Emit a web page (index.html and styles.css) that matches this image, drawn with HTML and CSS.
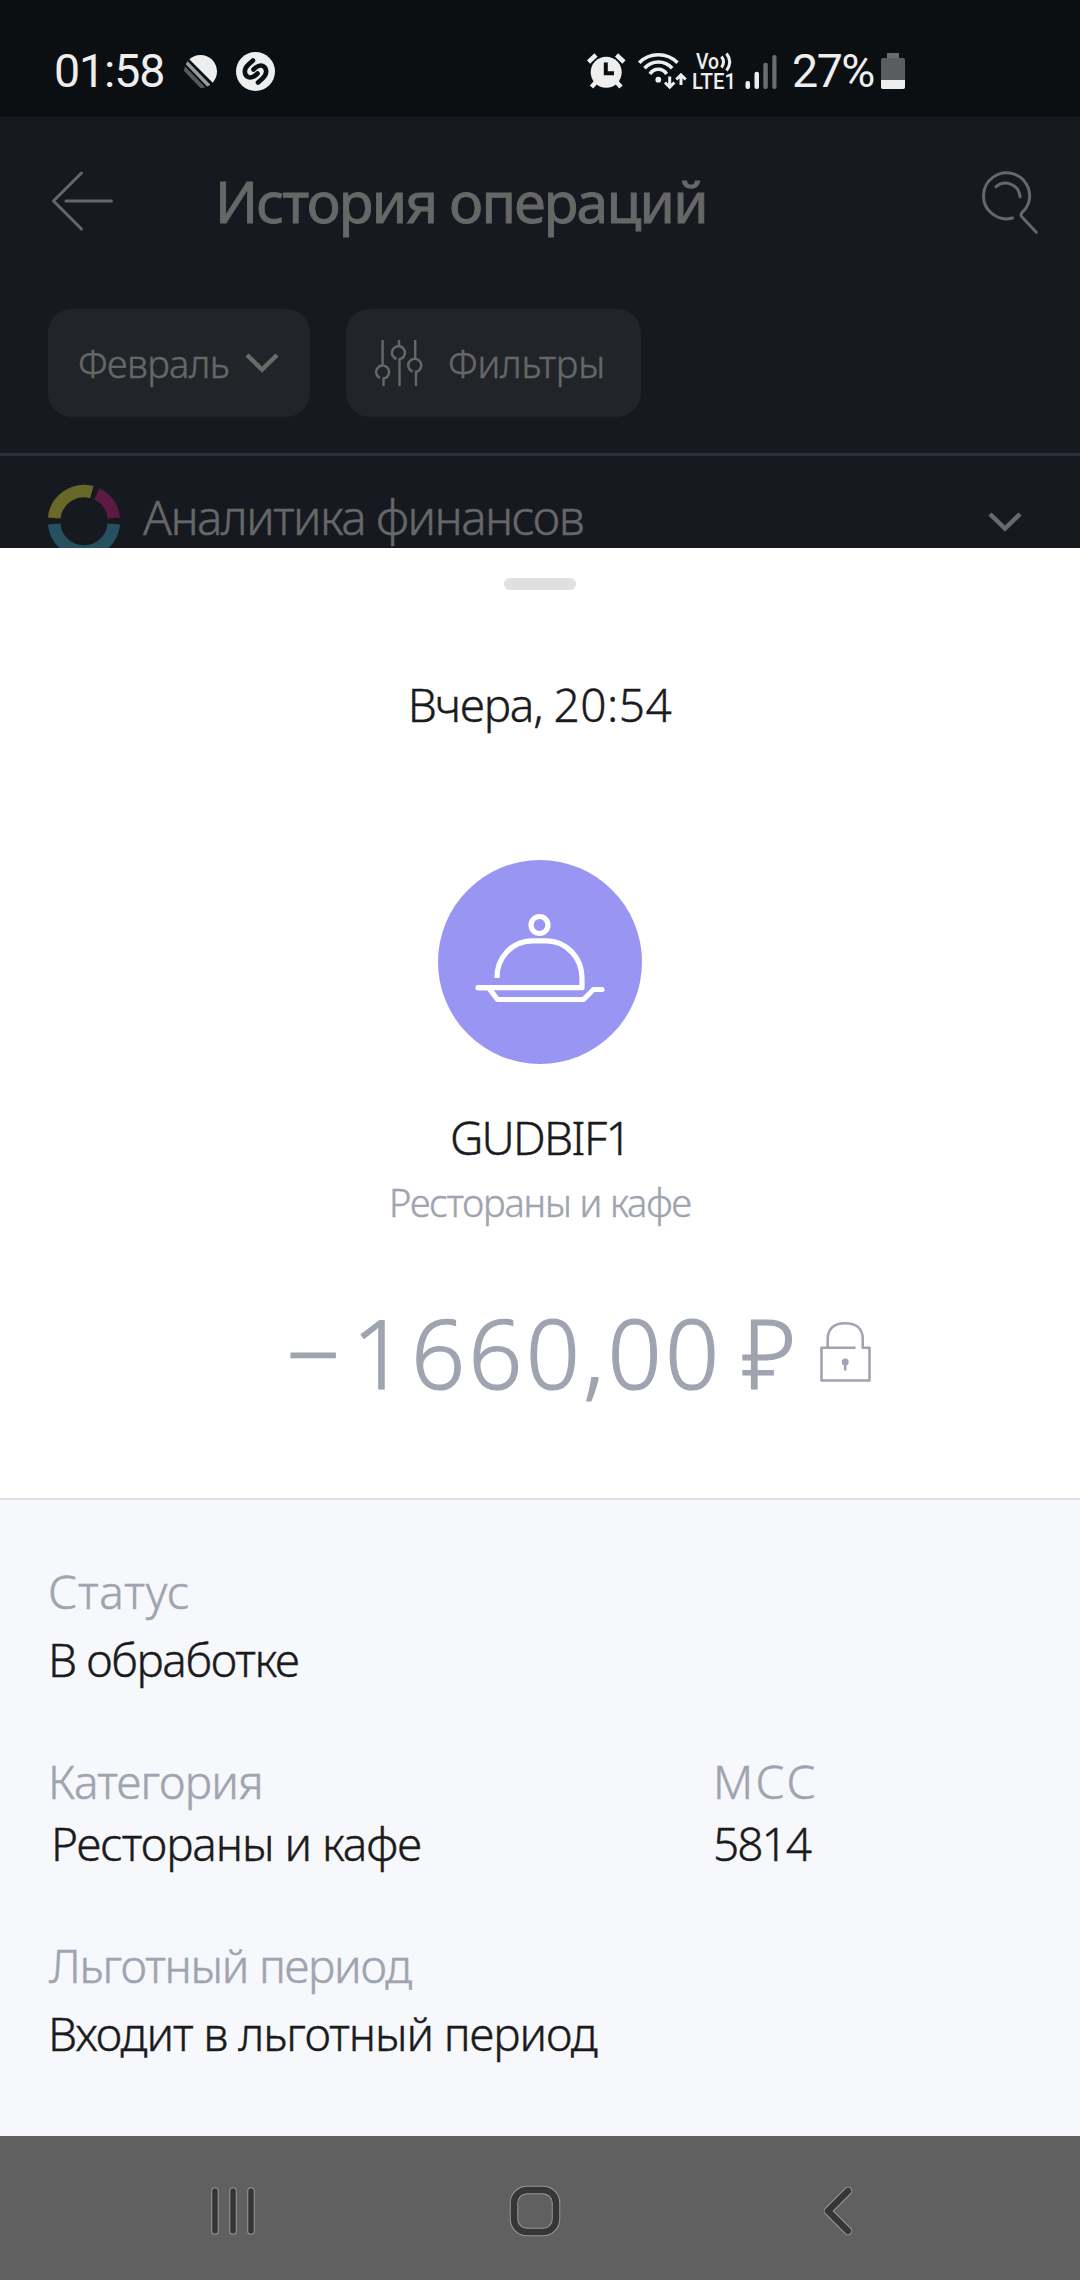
FILE: index.html
```html
<!DOCTYPE html>
<html lang="ru">
<head>
<meta charset="utf-8">
<title>История операций</title>
<link rel="stylesheet" href="styles.css">
</head>
<body>
<div class="screen">
  <header class="statusbar">
    <span class="clock">01:58</span>
    <svg class="ic-disc" width="35" height="36" viewBox="0 0 35 36">
      <clipPath id="disc"><circle cx="17.5" cy="18.5" r="16.5"/></clipPath>
      <g clip-path="url(#disc)">
        <path d="M5 5 31 31 40 20V0H5Z" fill="#eee"/>
        <path d="M0 6 30 37" stroke="#9a9b9c" stroke-width="3.6"/>
        <path d="M-3 11 25 40" stroke="#58595a" stroke-width="4"/>
      </g>
    </svg>
    <svg class="ic-note" width="39" height="39" viewBox="0 0 39 39">
      <circle cx="19.5" cy="19.5" r="19.5" fill="#eee"/>
      <g fill="none" stroke="#0b0f12" stroke-width="4.6" stroke-linecap="round">
        <path d="M17 8.5 12.5 12.5C6.500 18 9 23.500 12 25C15 26.500 17.500 25.500 21.500 21.500"/>
        <path d="M22 30.500 26.500 26.500C32.500 21 30 15.500 27 14C24 12.500 21.500 13.500 17.500 17.500"/>
      </g>
    </svg>
    <span class="spacer"></span>
    <svg class="ic-alarm" width="41" height="40" viewBox="0 0 41 40">
      <circle cx="20.200" cy="21.200" r="15.500" fill="#eee"/>
      <g fill="none" stroke="#eee" stroke-width="4.500"><path d="M2.500 11 10 4M38 11 30.500 4"/><path d="M10 31 5.500 36M30.500 31 35 36" /></g>
      <path d="M19.800 11.500V22.200H28" fill="none" stroke="#0b0f12" stroke-width="4"/>
    </svg>
    <svg class="ic-wifi" width="52" height="40" viewBox="0 0 52 40">
      <g fill="none" stroke="#eee" stroke-width="3.600">
        <path d="M3.200 11.700A27 27 0 0 1 41.500 11.700"/><path d="M8.500 17.200A18.600 18.600 0 0 1 36.200 17.200"/><path d="M14 23A9.700 9.700 0 0 1 30.600 23"/>
        <path d="M33.700 25.500V36M29 31.500 33.700 36.200 38.400 31.500M45 34V24M40.300 28.500 45 23.800 49.700 28.500" stroke-width="3"/>
      </g>
      <circle cx="22.300" cy="28.700" r="2.900" fill="#eee"/>
    </svg>
    <svg class="ic-volte" width="48" height="40" viewBox="0 0 48 40">
      <g class="volte-text"><text x="5" y="18" textLength="23" lengthAdjust="spacingAndGlyphs">Vo</text><text x="1" y="37.500" textLength="44" lengthAdjust="spacingAndGlyphs">LTE1</text></g>
      <path d="M30.500 5.500Q34.500 11 30.500 16.500M35.500 2.500Q42 11 35.500 19.500" fill="none" stroke="#eee" stroke-width="3"/>
    </svg>
    <svg class="ic-signal" width="32" height="36" viewBox="0 0 32 36">
      <g fill="#eee"><rect x=".5" y="28" width="4.500" height="8" rx="2"/><rect x="9.500" y="18.700" width="4.500" height="17.300" rx="2"/></g>
      <g fill="#6b6d6f"><rect x="18.300" y="9.700" width="4.500" height="26.300" rx="2"/><rect x="27.300" y="2" width="4.200" height="34" rx="2"/></g>
    </svg>
    <span class="percent">27%</span>
    <svg class="ic-battery" width="24" height="36" viewBox="0 0 24 36">
      <path d="M6 0H18V6H6Z" fill="#6a6b6d"/><rect y="5" width="24" height="31" rx="2" fill="#5b5c5e"/><path d="M0 27H24V34a2 2 0 0 1-2 2H2a2 2 0 0 1-2-2Z" fill="#eee"/>
    </svg>
  </header>

  <section class="history">
    <div class="appbar">
      <svg class="stroke-icon" width="66" height="66" viewBox="0 0 66 66"><path d="M31.500 5 3.500 33 31.500 61M16 33H61.500"/></svg>
      <h1 class="title">История операций</h1>
      <svg class="stroke-icon" width="62" height="66" viewBox="0 0 62 66"><path d="M32.500 50A23 23 0 1 1 45.700 40.500L42 44.500Q40 47 42 49L56.300 64.200M16 18.700A14.500 14.500 0 0 1 40 29"/></svg>
    </div>
    <div class="chips">
      <div class="chip chip-month"><span class="chip-text">Февраль</span>
        <svg class="chevron" width="34" height="20" viewBox="0 0 34 20"><path d="M2 2 17 16.500 32 2"/></svg>
      </div>
      <div class="chip chip-filter">
        <svg class="sliders" width="50" height="48" viewBox="0 0 50 48"><path d="M7.600 1V27M5 39A6.500 6.500 0 1 1 8.500 39.500V47M24 1V7.500M21.500 20A6.500 6.500 0 1 1 24.500 20.200V47M40.200 1V20M37.700 32.500A6.500 6.500 0 1 1 41 32.700V47"/></svg>
        <span class="chip-text">Фильтры</span>
      </div>
    </div>
    <div class="analytics">
      <svg class="donut" width="72" height="72" viewBox="0 0 72 72">
        <g fill="none" stroke-width="12.500"><path d="M6.200 33A29.900 29.900 0 0 1 43.800 7.100" stroke="#68682a"/><path d="M48.800 8.900A29.900 29.900 0 0 1 65.800 33" stroke="#5c1a42"/><path d="M6.200 39A29.900 29.900 0 0 0 65.800 39" stroke="#264f60"/></g>
      </svg>
      <span class="analytics-text">Аналитика финансов</span>
      <svg class="chevron" width="34" height="20" viewBox="0 0 34 20"><path d="M2 2 17 16.500 32 2"/></svg>
    </div>
  </section>

  <main class="sheet">
    <div class="handle"></div>
    <div class="date"><span class="day">Вчера, </span>20:54</div>
    <svg class="category-icon" width="204" height="204" viewBox="0 0 204 204">
      <circle cx="102" cy="102" r="102" fill="#9996f3"/>
      <g fill="none" stroke="#fff" stroke-width="5.200" stroke-linejoin="round">
        <circle cx="101.500" cy="65" r="8.500"/>
        <path d="M59 118C58.700 98 73.500 80.800 94.500 80.800H108.500C128.500 80.800 144 98 144 118V127.700H40" />
        <path d="M40 127.700H50.500L59.500 139.500H145.500L155.500 129.500H164" stroke-linecap="round"/>
      </g>
    </svg>
    <div class="merchant">GUDBIF1</div>
    <div class="merchant-type">Рестораны и кафе</div>
    <div class="amount">
      <span class="minus">−</span><span class="thousands">1</span><span class="sum">660,00</span><span class="currency">₽</span>
      <svg class="lock" width="56" height="64" viewBox="0 0 56 64"><path d="M37.500 27.700H3.500V60.500H51.500V27.700H44.700V19C44.700 8 37.500 3.300 27.200 3.300S9.700 8 9.700 19V27.700"/><circle cx="27.200" cy="42" r="3.500"/><path d="M27.200 42V50.500"/></svg>
    </div>
  </main>

  <section class="details">
    <div class="field"><div class="label status-label">Статус</div><div class="value status-value">В обработке</div></div>
    <div class="pair">
      <div class="field tight"><div class="label">Категория</div><div class="value category-value">Рестораны и кафе</div></div>
      <div class="field tight"><div class="label mcc-label">МСС</div><div class="value mcc-value">5814</div></div>
    </div>
    <div class="field"><div class="label period-label">Льготный период</div><div class="value">Входит в льготный период</div></div>
  </section>

  <nav class="navbar">
    <svg width="50" height="54" viewBox="0 0 50 54"><g class="nav-edge bars"><path d="M7 7V47M25 7V47M43 7V47"/></g><g class="nav-fill bars"><path d="M7 7V47M25 7V47M43 7V47"/></g></svg>
    <svg class="home" width="54" height="54" viewBox="0 0 54 54"><rect class="nav-edge" x="6" y="6" width="42" height="42" rx="13"/><rect class="nav-fill" x="6" y="6" width="42" height="42" rx="13"/></svg>
    <svg width="36" height="54" viewBox="0 0 36 54"><path class="nav-edge" d="M28 7 8 27 28 47"/><path class="nav-fill" d="M28 7 8 27 28 47"/></svg>
  </nav>
</div>
</body>
</html>
```
FILE: styles.css
```css
* { box-sizing: border-box; }
body { margin: 0; background: #161920; font-family: "Noto Sans", "Open Sans", sans-serif; font-weight: 300; }
svg { display: block; flex: none; overflow: visible; }
.screen { width: 1080px; height: 2280px; display: flex; flex-direction: column; overflow: hidden; }

/* System status bar */
.statusbar { height: 117px; padding: 25px 175px 0 54px; background: #0b0f12; display: flex; align-items: center; font-family: Roboto, sans-serif; font-weight: 400; font-size: 46.5px; line-height: 54px; color: #eee; }
.clock { width: 129px; letter-spacing: -1.1px; }
.ic-note { margin-left: 18px; }
.spacer { flex: 1; }
.ic-alarm { margin-right: 9px; }
.ic-wifi { margin-right: 3px; }
.ic-volte { margin-right: 6px; }
.ic-signal { margin-right: 15px; }
.percent { width: 89px; letter-spacing: -1.5px; white-space: nowrap; }
.volte-text { font-size: 21.5px; font-weight: 500; fill: #eee; }

/* Dimmed screen behind the sheet */
.history { height: 431px; overflow: hidden; color: #676767; background: linear-gradient(#161920 94%, #15181c); -webkit-text-stroke: 0.5px currentColor; }
.appbar { height: 168px; padding: 0 38px 0 50px; display: flex; align-items: center; }
.stroke-icon { fill: none; stroke: #676767; stroke-width: 3; stroke-linecap: round; stroke-linejoin: round; }
.title { flex: 1; margin: 0 0 0 99px; font-size: 57px; line-height: 80px; font-weight: 400; letter-spacing: -1.8px; -webkit-text-stroke: 0.9px currentColor; }
.chips { display: flex; gap: 36px; margin: 24px 48px 36px; }
.chip { height: 108px; border-radius: 24px; background: #212428; display: flex; align-items: center; font-size: 38px; line-height: 50px; }
.chip-month { width: 262px; padding: 0 31px 0 30px; justify-content: space-between; letter-spacing: -0.6px; }
.chip-filter { width: 295px; padding-left: 29px; gap: 23px; letter-spacing: -0.2px; }
.chevron { fill: none; stroke: #6a6a6a; stroke-width: 4.5; }
.sliders { fill: none; stroke: #676767; stroke-width: 2.4; }
.analytics { height: 134px; border-top: 3px solid #2b2e36; padding: 29px 58px 0 48px; display: flex; align-items: flex-start; }
.analytics-text { flex: 1; margin: -3px 0 0 23px; font-size: 47.5px; line-height: 70px; letter-spacing: -1.5px; }
.analytics .chevron { margin-top: 27px; }

/* Operation sheet */
.sheet { height: 952px; background: #fff; border-bottom: 2px solid #dfe1e5; padding-top: 30px; display: flex; flex-direction: column; align-items: center; color: #1b1b1d; -webkit-text-stroke: 0.4px currentColor; }
.handle { width: 72px; height: 12px; border-radius: 6px; background: #e0e0e0; }
.date { margin-top: 84px; font-size: 46px; line-height: 60px; letter-spacing: 0.5px; white-space: pre; }
.day { letter-spacing: -1.1px; }
.category-icon { margin-top: 126px; }
.merchant { margin-top: 43px; font-size: 46px; line-height: 60px; letter-spacing: -1.7px; }
.merchant-type { margin-top: 10px; font-size: 38px; line-height: 50px; letter-spacing: -1.1px; color: #9fa4b0; }
.amount { align-self: stretch; margin-top: 65px; padding-left: 286px; display: flex; font-size: 95px; line-height: 120px; color: #9fa4b0; -webkit-text-stroke: 1.2px currentColor; }
.minus, .thousands, .currency { width: 66px; }
.thousands { width: 59px; }
.sum { width: 331px; letter-spacing: 3.1px; }
.currency { width: 76px; }
.lock { margin-top: 28px; fill: none; stroke: #9fa4b0; stroke-width: 2.6; stroke-linejoin: round; }
.lock circle { fill: #9fa4b0; stroke: none; }

/* Operation details */
.details { height: 636px; background: #f7f8fb; padding: 61px 48px 0; display: flex; flex-direction: column; gap: 62px; font-size: 46px; line-height: 60px; letter-spacing: -1.1px; color: #1b1b1d; -webkit-text-stroke: 0.4px currentColor; }
.field { display: flex; flex-direction: column; gap: 8px; }
.tight { gap: 2px; }
.pair { display: grid; grid-template-columns: 665px 1fr; }
.label { color: #9fa4b0; letter-spacing: -0.75px; }
.label, .merchant-type { -webkit-text-stroke: 0.5px #9fa4b0; }
.status-label { letter-spacing: 0.8px; }
.status-value { letter-spacing: -1.4px; }
.category-value { padding-left: 3px; letter-spacing: -1.05px; }
.mcc-label { letter-spacing: 2.5px; }
.mcc-value { letter-spacing: -2px; }
.period-label { padding-left: 1px; letter-spacing: -1.25px; }

/* System navigation */
.navbar { height: 144px; padding: 5px 224px 0 208px; background: #606060; display: flex; align-items: center; justify-content: space-between; }
.nav-edge, .nav-fill { fill: none; stroke-linecap: round; stroke-linejoin: round; }
.nav-edge { stroke: #989898; stroke-width: 8.5; }
.nav-fill { stroke: #363636; stroke-width: 6.5; }
.nav-edge.bars { stroke-width: 7.5; }
.nav-fill.bars { stroke-width: 5.5; }
.home { margin-right: 8px; }
```
